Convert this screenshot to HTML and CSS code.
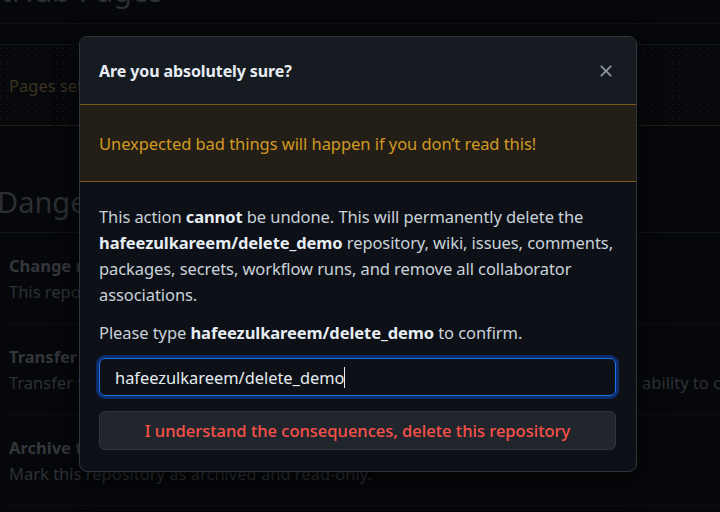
FILE: index.html
```html
<!DOCTYPE html>
<html>
<head>
<meta charset="utf-8">
<link rel="stylesheet" href="styles.css">
</head>
<body>
<div class="page">
  <h2 class="page-title">GitHub Pages</h2>
  <div class="pages-box">
    <p class="pages-text">Pages settings now has its own dedicated tab! Check it out here!</p>
  </div>
  <h2 class="danger-title">Danger Zone</h2>
  <div class="danger-box">
    <div class="danger-item">
      <div class="item-title">Change repository visibility</div>
      <div class="item-desc">This repository is currently public.</div>
    </div>
    <div class="danger-item">
      <div class="item-title">Transfer ownership</div>
      <div class="item-desc">Transfer this repository to another user or to an organization where you have the ability to create repositories.</div>
    </div>
    <div class="danger-item">
      <div class="item-title">Archive this repository</div>
      <div class="item-desc">Mark this repository as archived and read-only.</div>
    </div>
  </div>
</div>

<div class="dialog" role="dialog">
  <div class="dialog-header">
    <h1 class="dialog-title">Are you absolutely sure?</h1>
    <button class="close-btn" aria-label="Close">
      <svg width="20" height="20" viewBox="0 0 16 16"><path d="M3.72 3.72a.75.75 0 0 1 1.06 0L8 6.94l3.22-3.220a.75.75 0 1 1 1.06 1.06L9.06 8l3.22 3.22a.75.75 0 1 1-1.06 1.06L8 9.06l-3.22 3.22a.75.75 0 0 1-1.06-1.06L6.94 8 3.72 4.780a.75.75 0 0 1 0-1.06Z" fill="#8b949e"/></svg>
    </button>
  </div>
  <div class="flash-warn">Unexpected bad things will happen if you don’t read this!</div>
  <div class="dialog-body">
    <p class="body-text">This action <strong>cannot</strong> be undone. This will permanently delete the <strong>hafeezulkareem/delete_demo</strong> repository, wiki, issues, comments, packages, secrets, workflow runs, and remove all collaborator associations.</p>
    <p class="body-text confirm-text">Please type <strong>hafeezulkareem/delete_demo</strong> to confirm.</p>
    <div class="input-field">hafeezulkareem/delete_demo<span class="caret"></span></div>
    <button class="danger-btn">I understand the consequences, delete this repository</button>
  </div>
</div>
</body>
</html>
```

FILE: styles.css
```css
html, body {
  margin: 0;
  padding: 0;
  background: #05070a;
  font-family: "Noto Sans", "Open Sans", sans-serif;
  overflow: hidden;
  width: 720px;
  height: 512px;
}

.page {
  width: 900px;
  margin-left: -3px;
}

.page-title {
  margin: -31px 0 0 -26px;
  font-weight: 400;
  font-size: 30px;
  line-height: 44px;
  color: #2c3034;
  padding-bottom: 10px;
  border-bottom: 1px dotted #16191d;
}

.pages-box {
  margin-top: 20px;
  height: 80px;
  border-top: 1px solid #111418;
  border-bottom: 1px dotted #3a2f18;
  background-color: #07080c;
  background-image: radial-gradient(circle, #1c1e22 0.7px, transparent 1px);
  background-size: 7px 7px;
  display: flex;
  align-items: center;
  padding-left: 12px;
}

.pages-text {
  margin: 0;
  font-size: 16.5px;
  color: #3a321f;
  white-space: nowrap;
}

.danger-title {
  margin: 56px 0 0 0;
  font-weight: 400;
  font-size: 29px;
  line-height: 40px;
  color: #2b2e33;
  padding-bottom: 10px;
  border-bottom: 1px solid #111418;
}

.danger-box {
  padding-left: 12px;
}

.danger-item {
  padding: 20px 0 18px;
  border-bottom: 1px dotted #15181c;
  white-space: nowrap;
}

.item-title {
  font-weight: 700;
  font-size: 16.5px;
  line-height: 26px;
  color: #33363b;
}

.item-desc {
  font-size: 16.5px;
  line-height: 26px;
  color: #2e3135;
}

.dialog {
  position: absolute;
  left: 79px;
  top: 36px;
  width: 556px;
  background: #0d1117;
  border: 1px solid #30363d;
  border-radius: 8px;
  overflow: hidden;
  box-shadow: 0 8px 24px rgba(0, 0, 0, 0.6);
}

.dialog-header {
  background: #161b22;
  height: 67px;
  display: flex;
  align-items: center;
  justify-content: space-between;
  padding: 0 18px 0 19px;
}

.dialog-title {
  margin: 0;
  font-size: 16px;
  letter-spacing: -0.1px;
  font-weight: 700;
  color: #e6edf3;
}

.close-btn {
  background: none;
  border: none;
  padding: 0;
  width: 24px;
  height: 24px;
  display: flex;
  align-items: center;
  justify-content: center;
  cursor: pointer;
}

.flash-warn {
  background: #231f17;
  border-top: 1px solid #7d5a1c;
  border-bottom: 1px solid #7d5a1c;
  height: 76px;
  display: flex;
  align-items: center;
  padding: 0 19px;
  color: #d29922;
  font-size: 16.5px;
  letter-spacing: -0.05px;
}

.dialog-body {
  padding: 22px 20px 21px 19px;
}

.body-text {
  margin: 0 0 12px 0;
  font-size: 16.5px;
  letter-spacing: -0.08px;
  line-height: 26px;
  color: #c9d1d9;
}

.body-text strong {
  color: #e6edf3;
}

.confirm-text {
  margin-bottom: 12px;
}

.input-field {
  box-sizing: border-box;
  height: 38px;
  border: 1px solid #1f6feb;
  border-radius: 6px;
  box-shadow: 0 0 0 3px #0c2d6b;
  background: #0d1117;
  color: #e6edf3;
  font-size: 16.4px;
  display: flex;
  align-items: center;
  padding-left: 15px;
}

.caret {
  display: inline-block;
  width: 1px;
  height: 21px;
  background: #e6edf3;
}

.danger-btn {
  display: block;
  margin-top: 15px;
  width: 100%;
  height: 39px;
  background: #21262d;
  border: 1px solid #30363d;
  border-radius: 6px;
  color: #f85149;
  font-family: inherit;
  font-size: 16.5px;
  font-weight: 500;
  cursor: pointer;
}
```
